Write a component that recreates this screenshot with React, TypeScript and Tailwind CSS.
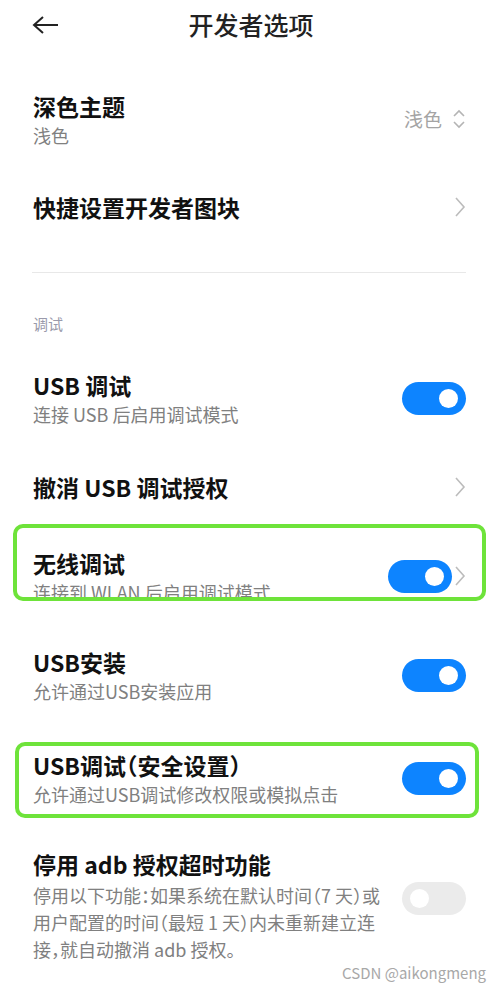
import React from "react";

function Toggle({ on }: { on: boolean }) {
  return (
    <div
      className={
        on
          ? "flex h-[33px] w-[64px] shrink-0 items-center justify-end rounded-full bg-[#0d84ff] pr-[8px]"
          : "flex h-[33px] w-[64px] shrink-0 items-center justify-start rounded-full bg-[#ebebeb] pl-[8px]"
      }
    >
      <div className="h-[19px] w-[19px] rounded-full bg-white" />
    </div>
  );
}

function Chevron() {
  return (
    <svg width="12" height="22" viewBox="0 0 12 22" className="shrink-0">
      <polyline points="2,2 10,11 2,20" fill="none" stroke="#bcbcbc" strokeWidth="1.6" />
    </svg>
  );
}

function UpDown() {
  return (
    <svg width="14" height="22" viewBox="0 0 14 22" className="shrink-0">
      <polyline points="2,8 7,3 12,8" fill="none" stroke="#b4b4b4" strokeWidth="1.6" />
      <polyline points="2,14 7,19 12,14" fill="none" stroke="#b4b4b4" strokeWidth="1.6" />
    </svg>
  );
}

const title = "text-[23px] leading-[30px] font-semibold text-[#111]";
const sub = "mt-[2px] text-[18px] leading-[24px] text-[#808080]";

export default function App() {
  return (
    <div className="min-h-[994px] w-[502px] bg-white font-['Noto_Sans_CJK_SC','Noto_Sans',sans-serif] [font-feature-settings:'halt']">
      {/* header */}
      <div className="flex h-[50px] items-center px-[32px]">
        <svg width="26" height="18" viewBox="0 0 26 18" className="shrink-0">
          <line x1="2" y1="9" x2="26" y2="9" stroke="#222" strokeWidth="2" />
          <polyline points="11,1 2,9 11,17" fill="none" stroke="#222" strokeWidth="2" />
        </svg>
        <div className="flex-1 text-center text-[25px] font-medium text-[#222]">开发者选项</div>
        <div className="w-[26px]" />
      </div>

      {/* 深色主题 */}
      <div className="mt-[41px] flex items-center pl-[33px] pr-[36px]">
        <div className="flex-1">
          <div className={title}>深色主题</div>
          <div className={sub}>浅色</div>
        </div>
        <div className="flex items-center gap-[10px]">
          <span className="text-[19px] text-[#a4a4a4]">浅色</span>
          <UpDown />
        </div>
      </div>

      {/* 快捷设置 */}
      <div className="mt-[45px] flex items-center pl-[33px] pr-[36px]">
        <div className={"flex-1 " + title}>快捷设置开发者图块</div>
        <Chevron />
      </div>

      <div className="ml-[32px] mr-[36px] mt-[50px] h-px bg-[#e8e8e8]" />

      <div className="mt-[41px] pl-[33px] text-[15px] leading-[20px] text-[#9a9aab]">调试</div>

      {/* USB 调试 */}
      <div className="mt-[36px] flex items-center pl-[33px] pr-[36px]">
        <div className="flex-1">
          <div className={title}>USB 调试</div>
          <div className={sub}>连接 USB 后启用调试模式</div>
        </div>
        <Toggle on />
      </div>

      {/* 撤消 */}
      <div className="mt-[46px] flex items-center pl-[33px] pr-[36px]">
        <div className={"flex-1 " + title}>撤消 USB 调试授权</div>
        <Chevron />
      </div>

      {/* 无线调试 (highlighted) */}
      <div className="ml-[13px] mr-[16px] mt-[22px] h-[77px] overflow-hidden rounded-[10px] border-4 border-[#6ee33a]">
        <div className="flex items-center pl-[16px] pr-[16px] pt-[20px]">
          <div className="flex-1">
            <div className={title}>无线调试</div>
            <div className={sub}>连接到 WLAN 后启用调试模式</div>
          </div>
          <Toggle on />
          <div className="ml-[2px]">
            <Chevron />
          </div>
        </div>
      </div>

      {/* USB安装 */}
      <div className="mt-[46px] flex items-center pl-[33px] pr-[36px]">
        <div className="flex-1">
          <div className={title}>USB安装</div>
          <div className={sub}>允许通过USB安装应用</div>
        </div>
        <Toggle on />
      </div>

      {/* USB调试（安全设置） (highlighted) */}
      <div className="ml-[15px] mr-[23px] mt-[39px] rounded-[10px] border-4 border-[#6ee33a] pb-[8px] pl-[14px] pr-[9px] pt-[4px]">
        <div className="flex items-center">
          <div className="flex-1">
            <div className={title}>USB调试（安全设置）</div>
            <div className={sub}>允许通过USB调试修改权限或模拟点击</div>
          </div>
          <Toggle on />
        </div>
      </div>

      {/* 停用 adb */}
      <div className="mt-[31px] flex items-start pl-[33px] pr-[36px]">
        <div className="flex-1">
          <div className={title}>停用 adb 授权超时功能</div>
          <div className="mt-[3px] text-[18px] leading-[27px] text-[#808080]">
            停用以下功能：如果系统在默认时间（7 天）或
            <br />
            用户配置的时间（最短 1 天）内未重新建立连
            <br />
            接，就自动撤消 adb 授权。
          </div>
        </div>
        <div className="mt-[33px]">
          <Toggle on={false} />
        </div>
      </div>

      <div className="pr-[16px] text-right text-[15px] leading-[20px] text-[#a8a8a8]">CSDN @aikongmeng</div>
    </div>
  );
}
